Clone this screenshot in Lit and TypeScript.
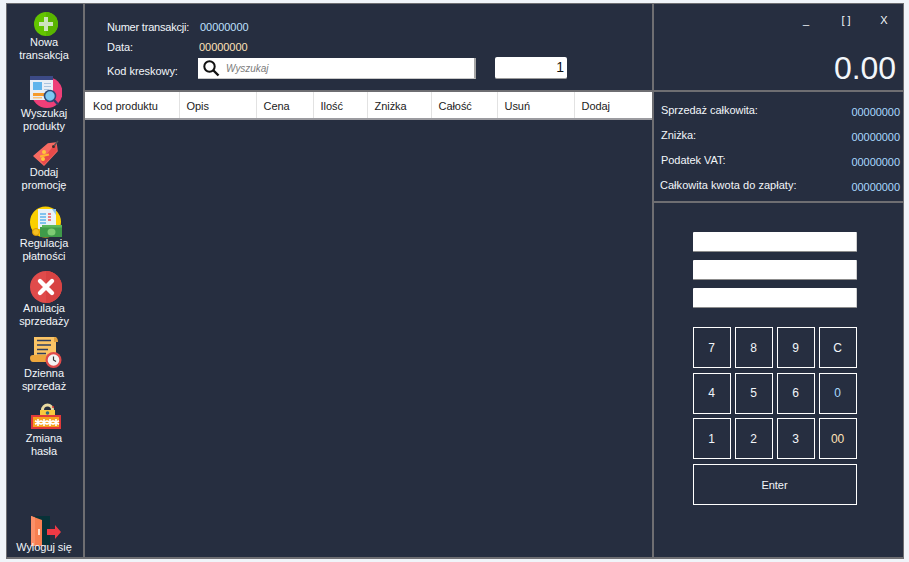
import { LitElement, html, css, svg } from "lit";
import { customElement } from "lit/decorators.js";

const star = (x: number) =>
  svg`<path d="M${x} 18v7M${x - 3} 19.8l6 3.4M${x + 3} 19.8l-6 3.4" stroke="#fff" stroke-width="1.6"/>`;

const icons: Record<string, unknown> = {
  plus: svg`<circle cx="16" cy="19" r="12" fill="#63c400"/><path d="M16 7a12 12 0 0 1 0 24z" fill="#59b500"/><path d="M14 12h4v5h5v4h-5v5h-4v-5H9v-4h5z" fill="#cfe3bd"/>`,
  search: svg`<circle cx="17" cy="16.5" r="15.5" fill="#ee3f78"/><rect x="0" y="0" width="23" height="24" fill="#e8eef6"/><rect x="0" y="0" width="23" height="4" fill="#3c4a86"/><rect x="3" y="6" width="9" height="8" fill="#5fb4ec"/><path d="M14 7.500h7M14 10.500h7M14 13.500h5" stroke="#a9c4de"/><rect x="3" y="17" width="13" height="3" fill="#f59a2c"/><rect x="3" y="21" width="9" height="1.500" fill="#f9c37e"/><circle cx="20" cy="20" r="5.500" fill="#7cc8f2" stroke="#2f4a78" stroke-width="1.600"/><path d="M24 24l4 4.500" stroke="#2f3c6a" stroke-width="2.400"/>`,
  tag: svg`<path d="M18 9l8-1 1 8-13 14-10-9z" fill="#f76b62" stroke="#f76b62" stroke-width="1.500" stroke-linejoin="round"/><path d="M26 8l1 8-13 14-3-4z" fill="#e84a4a"/><circle cx="23.500" cy="11.500" r="1.500" fill="#3a2a2a"/><path d="M24 11l4-5" stroke="#555" stroke-width="1.400"/><circle cx="14" cy="17" r="2" fill="#ffc93c"/><circle cx="13" cy="24" r="2" fill="#ffc93c"/><path d="M10 21.500l9-2" stroke="#ffb52e" stroke-width="1.800"/>`,
  pay: svg`<circle cx="15.500" cy="16" r="15.500" fill="#fbd000"/><rect x="8" y="3" width="18" height="20" fill="#e9f2f6"/><path d="M22 3l4 0v6z" fill="#8ec4e4"/><path d="M10 8h6M10 11h6M10 14h6M10 17h6" stroke="#5fb4ec" stroke-width="1.400"/><path d="M18 8h3M18 11h3M18 14h3" stroke="#ee5a5a" stroke-width="1.400"/><rect x="10" y="21" width="23" height="10" fill="#3f9b4a"/><rect x="12" y="19" width="20" height="2.500" fill="#5cb85c"/><ellipse cx="21.500" cy="26" rx="4" ry="3.500" fill="#7ecb74"/><circle cx="6" cy="26" r="3.500" fill="#f5bf20" stroke="#d99a00"/>`,
  cancel: svg`<circle cx="16" cy="16" r="16" fill="#e04b4b"/><path d="M16 0a16 16 0 0 1 0 32z" fill="#d84343"/><path d="M10 10l12 12M22 10L10 22" stroke="#fff" stroke-width="4.400" stroke-linecap="round"/>`,
  daily: svg`<path d="M4 1h22v23H2c1-1 2-2 2-4z" fill="#fbc465"/><path d="M0 22c0-2 1-3 3-3h14v4c0 1 0 2 1 3H3c-2 0-3-2-3-4z" fill="#eda63c"/><path d="M25 1c2 0 3 2 3 5h-4V3c0-1 0-2 1-2z" fill="#e0a040"/><path d="M7 4.500h14M7 9h14M7 13.500h11M7 17.500h9" stroke="#2f3e60" stroke-width="1.300"/><circle cx="23.500" cy="24" r="8" fill="#e04b4b"/><circle cx="23.500" cy="24" r="5.800" fill="#f3f3f3"/><path d="M23.500 20.500V24l2.500 1.500" stroke="#333" stroke-width="1.200" fill="none"/>`,
  lock: svg`<path d="M11 14V9a6.500 6.500 0 0 1 13 0v5h-3V9a3.500 3.500 0 0 0-7 0v5z" fill="#e8d9a0"/><rect x="10" y="9" width="15" height="7" fill="#f8c93e"/><circle cx="17.500" cy="12" r="1.800" fill="#2f6d80"/><circle cx="23" cy="6" r="1" fill="#d33"/><rect x="1" y="14" width="30" height="14" fill="#e03a3a"/><rect x="3" y="16" width="26" height="10" fill="#f7a21f"/>${[8, 14, 20, 26].map(star)}`,
  exit: svg`<rect x="5" y="0" width="15" height="29" fill="#083238"/><path d="M1 0l11 4v26H1z" fill="#f77f50"/><path d="M1 0l4 1.500V30H1z" fill="#fb9068"/><rect x="8" y="13" width="2" height="6" fill="#ffe0cc"/><path d="M17 13h8v-4l6 7-6 7v-4h-8z" fill="#f03a45"/>`,
};

const menu = [
  ["plus", "Nowa", "transakcja"],
  ["search", "Wyszukaj", "produkty"],
  ["tag", "Dodaj", "promocję"],
  ["pay", "Regulacja", "płatności"],
  ["cancel", "Anulacja", "sprzedaży"],
  ["daily", "Dzienna", "sprzedaż"],
  ["lock", "Zmiana", "hasła"],
];

const columns = [
  ["Kod produktu", 95],
  ["Opis", 77],
  ["Cena", 57],
  ["Ilość", 54],
  ["Zniżka", 64],
  ["Całość", 66],
  ["Usuń", 77],
  ["Dodaj", 77],
] as const;

const totals = [
  ["Sprzedaż całkowita:", "00000000"],
  ["Zniżka:", "00000000"],
  ["Podatek VAT:", "00000000"],
  ["Całkowita kwota do zapłaty:", "00000000"],
];

const keys = ["7", "8", "9", "C", "4", "5", "6", "0", "1", "2", "3", "00"];

@customElement("app-root")
export class AppRoot extends LitElement {
  static styles = css`
    :host {
      display: block;
      width: 909px;
      height: 562px;
      box-sizing: border-box;
      padding: 3px 5px 3px 6px;
      background: #f0f4f9;
      font-family: "Liberation Sans", Arial, sans-serif;
      font-size: 11px;
      letter-spacing: -0.05px;
      color: #f2f6fa;
    }
    .window {
      height: 100%;
      box-sizing: border-box;
      display: grid;
      grid-template-columns: 78px 567px 1fr;
      background: #262e40;
      border: 1px solid #6e6e72;
      border-bottom-width: 2px;
    }
    .sidebar {
      display: grid;
      grid-template-rows: 71px 59px 71px 65px 65px 65px 1fr auto;
      padding-top: 1px;
      padding-bottom: 3px;
      border-right: 2px solid #6e6e72;
    }
    .item {
      display: flex;
      flex-direction: column;
      align-items: center;
      line-height: 13px;
      text-align: center;
    }
    .item svg {
      width: 32px;
      height: 32px;
      margin: 0 0 -1px 2px;
      display: block;
      flex: none;
    }
    .item span {
      margin-right: 2px;
    }
    .logout {
      margin-top: -6px;
    }
    .logout svg {
      margin-bottom: -7px;
    }
    .main {
      display: flex;
      flex-direction: column;
    }
    .info {
      height: 88px;
      box-sizing: border-box;
      padding: 14px 0 0 22px;
      display: grid;
      grid-template-columns: 91px 278px 19px 72px;
      grid-template-rows: 18px 18px 22px;
      row-gap: 2px;
      align-items: center;
      border-bottom: 2px solid #6e6e72;
    }
    .tight {
      letter-spacing: -0.2px;
    }
    .barcode {
      padding-top: 3px;
    }
    .value {
      color: #bfe0ff;
      padding-left: 2px;
    }
    .value.date {
      color: #ffe2b8;
      padding-left: 1px;
    }
    .span-3 {
      grid-column: 2 / 5;
    }
    .search {
      height: 21px;
      align-self: start;
      box-sizing: border-box;
      display: flex;
      align-items: center;
      gap: 6px;
      padding-left: 4px;
      background: #fff;
      border-right: 2px solid #a5a5a5;
      border-bottom: 1px solid #c8c8c8;
    }
    .search svg {
      width: 18px;
      height: 18px;
      flex: none;
    }
    .search span {
      color: #7b7b7b;
      font-style: italic;
      font-size: 10px;
    }
    .qty {
      grid-column: 4;
      height: 22px;
      align-self: start;
      margin-top: -1px;
      box-sizing: border-box;
      padding-right: 3px;
      background: #fff;
      border-radius: 2px;
      border-bottom: 1px solid #9a9a9a;
      color: #111;
      font-size: 14px;
      line-height: 21px;
      text-align: right;
    }
    .table-head {
      display: flex;
      height: 28px;
      box-sizing: border-box;
      background: #fff;
      border-bottom: 2px solid #9b9ba0;
      color: #222;
      line-height: 28px;
    }
    .table-head div {
      box-sizing: border-box;
      padding-left: 6.5px;
      border-right: 1px solid #e2e2e2;
    }
    .table-head div:first-child {
      padding-left: 8px;
    }
    .table-head div:last-child {
      border-right: none;
    }
    .right {
      display: flex;
      flex-direction: column;
      border-left: 2px solid #6e6e72;
    }
    .display {
      height: 88px;
      box-sizing: border-box;
      padding-top: 8px;
      border-bottom: 2px solid #6e6e72;
    }
    .controls {
      display: grid;
      grid-template-columns: 1fr 38px 38px;
      height: 24px;
      line-height: 16px;
      text-align: center;
    }
    .controls span:first-child {
      text-align: right;
      padding-right: 18px;
    }
    .amount {
      margin-top: 14px;
      padding-right: 7px;
      font-size: 32px;
      line-height: 37px;
      text-align: right;
    }
    .totals {
      height: 111px;
      box-sizing: border-box;
      padding: 5px 3px 0 7px;
      display: grid;
      grid-auto-rows: 25px;
      border-bottom: 2px solid #6e6e72;
    }
    .totals div {
      display: flex;
      justify-content: space-between;
      align-items: center;
    }
    .totals div:last-child span {
      margin-left: -1px;
      letter-spacing: 0.03px;
    }
    .totals b {
      font-weight: normal;
      color: #a9d8ff;
      padding-top: 4px;
    }
    .pad {
      padding: 29px 0 0 39px;
      width: 164px;
    }
    .fields {
      display: grid;
      grid-auto-rows: 20px;
      row-gap: 8px;
      margin-bottom: 19px;
    }
    .fields div {
      background: #fff;
      border-radius: 1px;
      border-bottom: 1px solid #8c8c8c;
      border-right: 1px solid #d0d0d0;
    }
    .keys {
      display: grid;
      grid-template-columns: repeat(4, 38px);
      grid-auto-rows: 41px;
      gap: 4.67px 4px;
    }
    .key {
      box-sizing: border-box;
      border: 1px solid #fff;
      padding-right: 1px;
      display: flex;
      align-items: center;
      justify-content: center;
      font-size: 12px;
    }
    .key.zero {
      color: #a9d8ff;
    }
    .key.double {
      color: #ffe2b8;
    }
    .enter {
      grid-column: 1 / 5;
      padding-top: 1px;
      font-size: 11px;
    }
  `;

  render() {
    return html`
      <div class="window">
        <nav class="sidebar">
          ${menu.map(
            ([icon, a, b]) => html`
              <div class="item">
                <svg viewBox="0 0 32 32">${icons[icon]}</svg>
                <span>${a}</span>
                <span>${b}</span>
              </div>
            `
          )}
          <div></div>
          <div class="item logout">
            <svg viewBox="0 0 32 32">${icons.exit}</svg>
            <span>Wyloguj się</span>
          </div>
        </nav>

        <section class="main">
          <div class="info">
            <span class="tight">Numer transakcji:</span>
            <span class="value span-3">00000000</span>
            <span>Data:</span>
            <span class="value date span-3">00000000</span>
            <span class="barcode">Kod kreskowy:</span>
            <div class="search">
              <svg viewBox="0 0 18 18">
                <circle cx="7.5" cy="7.5" r="5.2" fill="none" stroke="#111" stroke-width="2"/>
                <path d="M11.5 11.5l5 5" stroke="#111" stroke-width="2.4"/>
              </svg>
              <span>Wyszukaj</span>
            </div>
            <div class="qty">1</div>
          </div>
          <div class="table-head">
            ${columns.map(
              ([name, width]) => html`<div style="width:${width}px">${name}</div>`
            )}
          </div>
        </section>

        <aside class="right">
          <div class="display">
            <div class="controls">
              <span>_</span>
              <span>[ ]</span>
              <span>X</span>
            </div>
            <div class="amount">0.00</div>
          </div>
          <div class="totals">
            ${totals.map(
              ([label, value]) => html`<div><span>${label}</span><b>${value}</b></div>`
            )}
          </div>
          <div class="pad">
            <div class="fields"><div></div><div></div><div></div></div>
            <div class="keys">
              ${keys.map(
                (k) => html`<div class="key ${k === "0" ? "zero" : k === "00" ? "double" : ""}">${k}</div>`
              )}
              <div class="key enter">Enter</div>
            </div>
          </div>
        </aside>
      </div>
    `;
  }
}
